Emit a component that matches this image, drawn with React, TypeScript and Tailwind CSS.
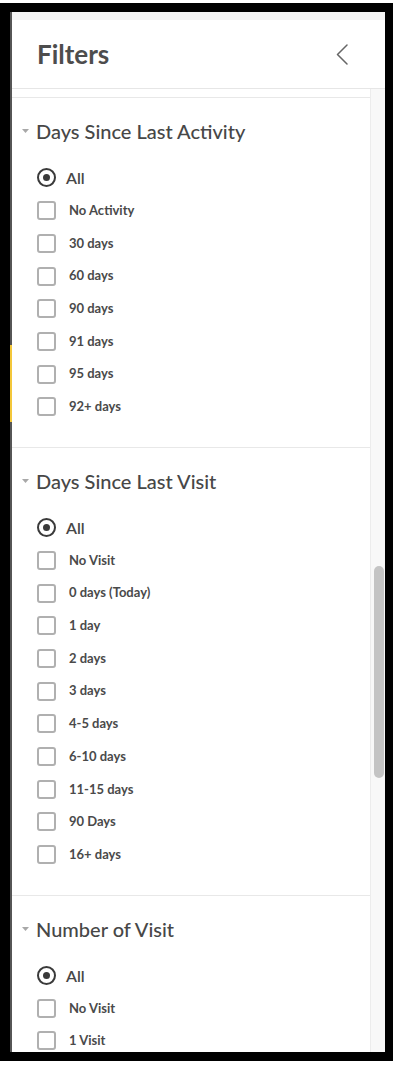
import * as React from "react"

const sections = [
  {
    title: "Days Since Last Activity",
    options: ["No Activity", "30 days", "60 days", "90 days", "91 days", "95 days", "92+ days"],
  },
  {
    title: "Days Since Last Visit",
    options: ["No Visit", "0 days (Today)", "1 day", "2 days", "3 days", "4-5 days", "6-10 days", "11-15 days", "90 Days", "16+ days"],
  },
  {
    title: "Number of Visit",
    options: ["No Visit", "1 Visit"],
  },
]

function Caret() {
  return (
    <svg width="7" height="4" viewBox="0 0 7 4" className="shrink-0">
      <path d="M0 0 L7 0 L3.5 4 Z" fill="#a8a8a8" />
    </svg>
  )
}

function FilterSection({ title, options }: { title: string; options: string[] }) {
  return (
    <div className="border-t border-[#e8e8e8] pt-[19px] pb-[23.65px]">
      <div className="flex h-[28px] items-center gap-[7px] pl-[10px]">
        <Caret />
        <span className="text-[20px] font-medium text-[#474747]">{title}</span>
      </div>
      <div className="mt-[16.65px] pl-[25px]">
        <div className="flex h-[32.7px] items-center gap-[10px]">
          <span className="flex h-[19px] w-[19px] items-center justify-center rounded-full border-2 border-[#3a3a3a]">
            <span className="h-[7px] w-[7px] rounded-full bg-[#3a3a3a]" />
          </span>
          <span className="text-[16px] font-semibold text-[#474747]">All</span>
        </div>
        {options.map((opt) => (
          <div key={opt} className="flex h-[32.7px] items-center gap-[13px]">
            <span className="h-[19px] w-[19px] rounded-[3px] border-2 border-[#b0b0b0] bg-white" />
            <span className="text-[13px] font-bold text-[#4a4a4a]">{opt}</span>
          </div>
        ))}
      </div>
    </div>
  )
}

export default function App() {
  return (
    <div className="h-[1068px] w-[400px] overflow-hidden bg-white pt-[3px]" style={{ fontFamily: "Lato, 'Open Sans', sans-serif" }}>
      <div className="flex h-[1058px] w-[393px] border-t-[9px] border-r-[8px] border-b-[9px] border-l-[10px] border-black">
        <div className="flex w-[2px] shrink-0 flex-col bg-[#565656]">
          <div className="h-[333px]" />
          <div className="h-[77px] bg-[#f3c73a]" />
        </div>
        <div className="flex min-w-0 flex-1 flex-col">
          <div className="h-[8px] bg-[#f4f4f4]" />
          <div className="flex h-[69px] shrink-0 items-center justify-between border-b border-[#e6e6e6] pr-[37px] pl-[25px]">
            <h1 className="text-[26px] font-bold text-[#4d4d4d]">Filters</h1>
            <svg width="12" height="21" viewBox="0 0 12 21" fill="none">
              <path d="M11 1 L1.5 10.5 L11 20" stroke="#666" strokeWidth="1.5" strokeLinecap="round" strokeLinejoin="round" />
            </svg>
          </div>
          <div className="flex min-h-0 flex-1">
            <div className="min-w-0 flex-1 overflow-hidden">
              <div className="h-[8px]" />
              {sections.map((s) => (
                <FilterSection key={s.title} title={s.title} options={s.options} />
              ))}
            </div>
            <div className="w-[15px] shrink-0 border-l border-[#ececec] bg-[#f8f8f8] pt-[477px]">
              <div className="ml-[3px] h-[212px] w-[10px] rounded-full bg-[#c4c4c4]" />
            </div>
          </div>
        </div>
      </div>
    </div>
  )
}
